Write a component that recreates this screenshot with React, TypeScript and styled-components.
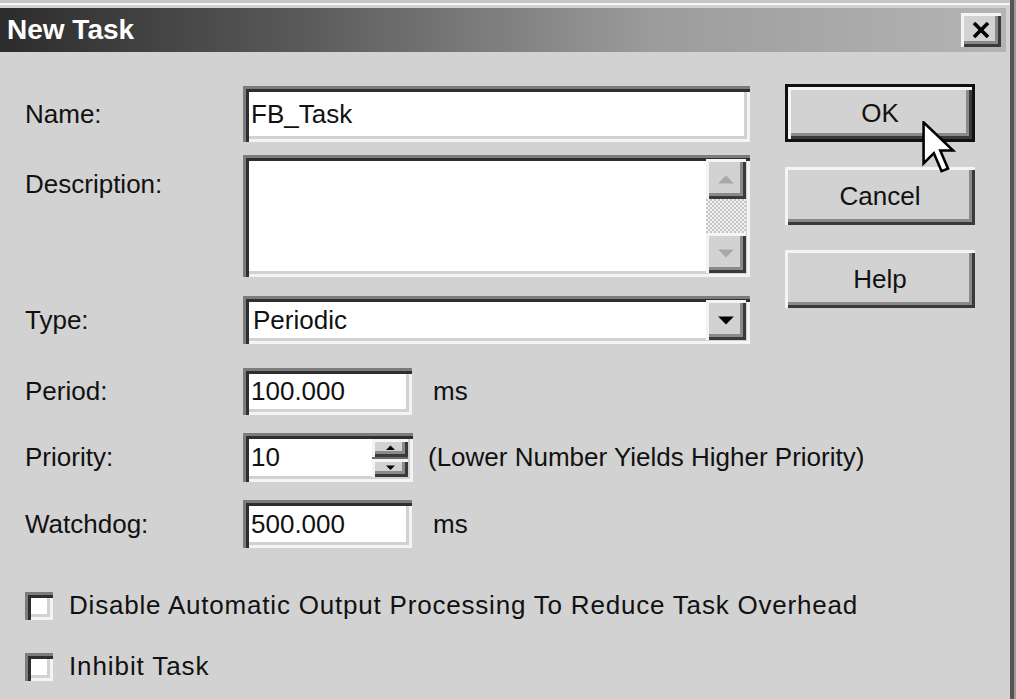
import styled, { createGlobalStyle, css } from "styled-components";

const GlobalStyle = createGlobalStyle`
  html, body {
    margin: 0;
    padding: 0;
    background: #d2d2d2;
  }
  body {
    font-family: "Liberation Sans", Arial, sans-serif;
    overflow: hidden;
  }
`;

const raised = css`
  background: #d2d2d2;
  box-shadow: inset 3px 3px 0 #f4f4f4, inset -3px -3px 0 #3a3a3a,
    inset -6px -6px 0 #8a8a8a;
`;

const sunken = css`
  background: #fff;
  box-shadow: inset 3px 3px 0 #7c7c7c, inset 6px 6px 0 #2e2e2e,
    inset -3px -3px 0 #f4f4f4, inset -6px -6px 0 #d2d2d2;
`;

const Frame = styled.div`
  position: relative;
  width: 1016px;
  height: 699px;
  box-sizing: border-box;
  padding-top: 8px;
  background: linear-gradient(#c6c6c6 0 3px, #f6f6f6 3px 5px, #d2d2d2 5px) top / 100% 8px no-repeat,
    #d2d2d2;
  box-shadow: inset -2px 0 0 #9a9a9a, inset -6px 0 0 #555;
  overflow: hidden;
`;

const TitleBar = styled.div`
  display: flex;
  align-items: center;
  justify-content: space-between;
  height: 44px;
  margin-right: 10px;
  padding: 0 5px 0 7px;
  background: linear-gradient(90deg, #2c2c2c 0%, #5a5a5a 30%, #9c9c9c 65%, #b4b4b4 100%);
`;

const Title = styled.span`
  color: #fff;
  font-size: 28px;
  font-weight: bold;
`;

const CloseBtn = styled.div`
  ${raised};
  display: flex;
  align-items: center;
  justify-content: center;
  width: 40px;
  height: 34px;
`;

const Body = styled.div`
  display: flex;
  padding: 34px 0 0 25px;
`;

const Form = styled.div`
  display: flex;
  flex-direction: column;
  width: 725px;
  flex: none;
`;

const Row = styled.div<{ $top: number; $h: number; $alignTop?: boolean }>`
  display: flex;
  align-items: ${(p) => (p.$alignTop ? "flex-start" : "center")};
  margin-top: ${(p) => p.$top}px;
  height: ${(p) => p.$h}px;
`;

const Label = styled.span<{ $pad?: number; $w?: number; $spacing?: number }>`
  flex: none;
  width: ${(p) => (p.$w ? `${p.$w}px` : "auto")};
  font-size: 26px;
  color: #111;
  white-space: nowrap;
  letter-spacing: ${(p) => p.$spacing ?? 0}px;
  padding-top: ${(p) => p.$pad ?? 0}px;
`;

const Field = styled.div<{ $w: number; $h: number }>`
  ${sunken};
  position: relative;
  flex: none;
  display: flex;
  align-items: center;
  box-sizing: border-box;
  width: ${(p) => p.$w}px;
  height: ${(p) => p.$h}px;
  padding-left: 8px;
  font-size: 26px;
  color: #111;
  white-space: nowrap;
`;

const Unit = styled.span<{ $gap: number }>`
  margin-left: ${(p) => p.$gap}px;
  font-size: 26px;
  color: #111;
  white-space: nowrap;
`;

const ScrollCol = styled.div`
  display: flex;
  flex-direction: column;
  margin-left: auto;
  margin-right: 4px;
  width: 40px;
  height: calc(100% - 8px);
  align-self: center;
`;

const ArrowBtn = styled.div<{ $h: number }>`
  ${raised};
  display: flex;
  align-items: center;
  justify-content: center;
  height: ${(p) => p.$h}px;
  flex: none;
`;

const Track = styled.div`
  flex: 1;
  background: repeating-conic-gradient(#f2f2f2 0 25%, #c4c4c4 0 50%) 0 0 / 4px 4px;
`;

const Spinner = styled.div`
  display: flex;
  flex-direction: column;
  gap: 2px;
  margin-left: auto;
  margin-right: 5px;
  width: 36px;
  height: 38px;
  background: #6a6a6a;
`;

const SpinBtn = styled.div`
  ${raised};
  flex: 1;
  display: flex;
  align-items: center;
  justify-content: center;
`;

const CheckRow = styled.div<{ $top: number }>`
  display: flex;
  align-items: center;
  gap: 16px;
  margin-top: ${(p) => p.$top}px;
`;

const CheckBox = styled.div`
  ${sunken};
  flex: none;
  width: 28px;
  height: 28px;
`;

const Buttons = styled.div`
  display: flex;
  flex-direction: column;
  gap: 25px;
  margin-left: 35px;
  margin-top: -2px;
`;

const Button = styled.div<{ $default?: boolean }>`
  ${raised};
  display: flex;
  align-items: center;
  justify-content: center;
  box-sizing: border-box;
  width: 190px;
  height: 58px;
  font-size: 26px;
  color: #111;
  ${(p) =>
    p.$default &&
    css`
      border: 3px solid #111;
    `}
`;

const Pointer = styled.svg`
  position: absolute;
  left: 922px;
  top: 121px;
`;

const Tri = ({ dir, color, w }: { dir: "up" | "down"; color: string; w: number }) => (
  <svg width={w} height={w / 2 + 1} viewBox="0 0 14 8">
    <path d={dir === "up" ? "M0 7.5 L7 0.5 L14 7.5 Z" : "M0 0.5 L14 0.5 L7 7.5 Z"} fill={color} />
  </svg>
);

export default function App() {
  return (
    <>
      <GlobalStyle />
      <Frame>
        <TitleBar>
          <Title>New Task</Title>
          <CloseBtn>
            <svg width="18" height="16" viewBox="0 0 18 16">
              <path d="M2 1 L16 15 M16 1 L2 15" stroke="#000" strokeWidth="3.6" />
            </svg>
          </CloseBtn>
        </TitleBar>
        <Body>
          <Form>
            <Row $top={0} $h={56}>
              <Label $w={218}>Name:</Label>
              <Field $w={507} $h={56}>FB_Task</Field>
            </Row>
            <Row $top={13} $h={122} $alignTop>
              <Label $w={218} $pad={14}>Description:</Label>
              <Field $w={507} $h={122}>
                <ScrollCol>
                  <ArrowBtn $h={40}>
                    <Tri dir="up" color="#a8a8a8" w={16} />
                  </ArrowBtn>
                  <Track />
                  <ArrowBtn $h={40}>
                    <Tri dir="down" color="#a8a8a8" w={16} />
                  </ArrowBtn>
                </ScrollCol>
              </Field>
            </Row>
            <Row $top={19} $h={48}>
              <Label $w={218}>Type:</Label>
              <Field $w={507} $h={48}>
                <span style={{ paddingLeft: 2 }}>Periodic</span>
                <ScrollCol>
                  <ArrowBtn $h={40}>
                    <Tri dir="down" color="#000" w={16} />
                  </ArrowBtn>
                </ScrollCol>
              </Field>
            </Row>
            <Row $top={24} $h={47}>
              <Label $w={218}>Period:</Label>
              <Field $w={169} $h={47}>100.000</Field>
              <Unit $gap={21}>ms</Unit>
            </Row>
            <Row $top={18} $h={49}>
              <Label $w={218}>Priority:</Label>
              <Field $w={170} $h={49}>
                10
                <Spinner>
                  <SpinBtn>
                    <Tri dir="up" color="#000" w={9} />
                  </SpinBtn>
                  <SpinBtn>
                    <Tri dir="down" color="#000" w={9} />
                  </SpinBtn>
                </Spinner>
              </Field>
              <Unit $gap={15}>(Lower Number Yields Higher Priority)</Unit>
            </Row>
            <Row $top={18} $h={48}>
              <Label $w={218}>Watchdog:</Label>
              <Field $w={169} $h={48}>500.000</Field>
              <Unit $gap={21}>ms</Unit>
            </Row>
            <CheckRow $top={42}>
              <CheckBox />
              <Label $spacing={0.8}>Disable Automatic Output Processing To Reduce Task Overhead</Label>
            </CheckRow>
            <CheckRow $top={30}>
              <CheckBox />
              <Label $spacing={0.9}>Inhibit Task</Label>
            </CheckRow>
          </Form>
          <Buttons>
            <Button $default>OK</Button>
            <Button>Cancel</Button>
            <Button>Help</Button>
          </Buttons>
        </Body>
        <Pointer width="34" height="54" viewBox="0 0 13 21">
          <path
            d="M0.5 0.5 L0.5 16.5 L4.5 12.5 L7.5 19.5 L10 18.5 L7 11.5 L12 11.5 Z"
            fill="#fff"
            stroke="#000"
            strokeWidth="1"
            strokeLinejoin="miter"
          />
        </Pointer>
      </Frame>
    </>
  );
}
